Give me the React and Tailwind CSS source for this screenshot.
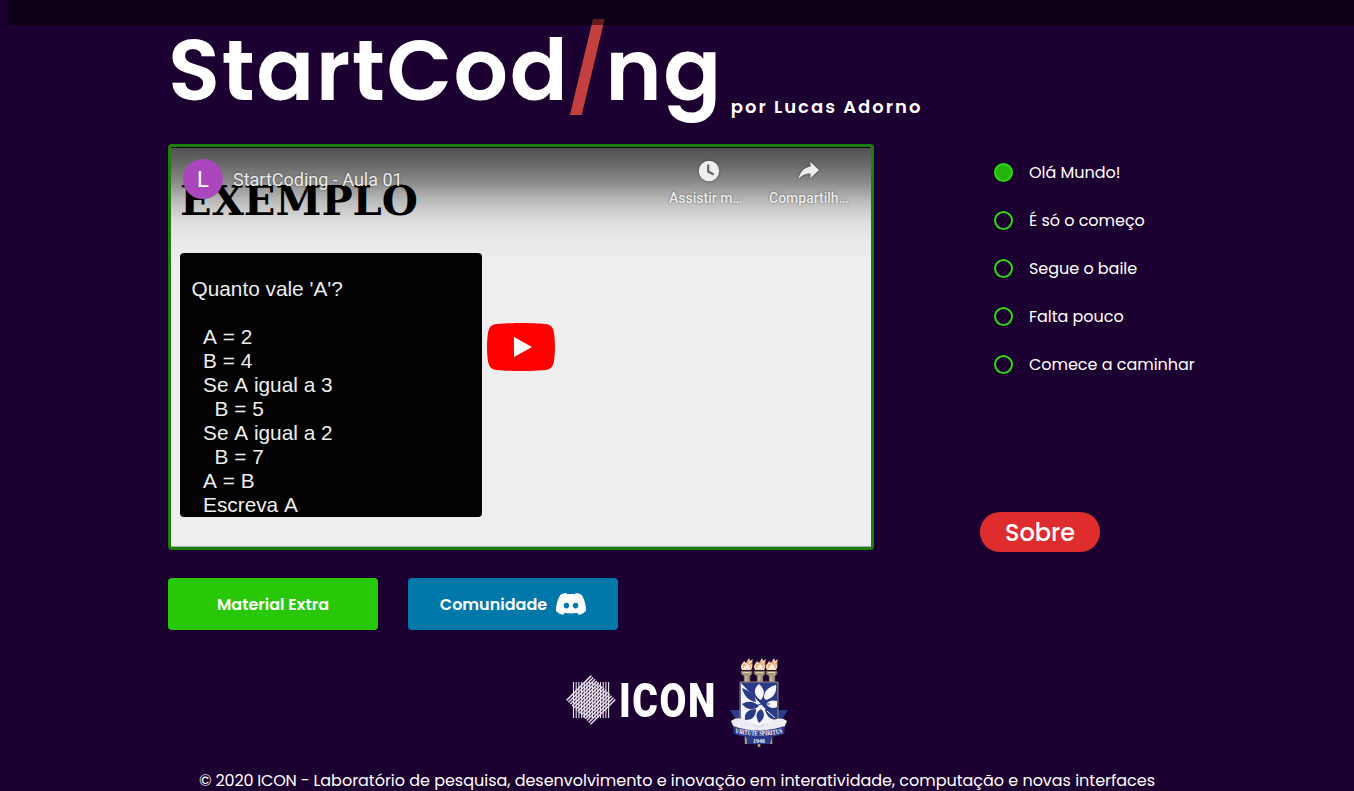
const lessons = ["Olá Mundo!", "É só o começo", "Segue o baile", "Falta pouco", "Comece a caminhar"];

const code = `Quanto vale 'A'?

  A = 2
  B = 4
  Se A igual a 3
    B = 5
  Se A igual a 2
    B = 7
  A = B
  Escreva A`;

function DiscordMark() {
  return (
    <svg viewBox="0 0 30 22" className="h-[22px] w-[30px]" fill="white">
      <path
        fillRule="evenodd"
        d="M4.500 1.700C6.300.800 8.300.200 10.300 0L11 1.200C13.600.800 16.400.800 19 1.200L19.700 0C21.700.200 23.700.800 25.500 1.700C28.500 6.200 30 11.600 30 17.800C28.200 20 25.600 21.300 22.900 22L21.300 19.700C17.300 20.700 12.700 20.700 8.700 19.700L7.100 22C4.400 21.300 1.800 20 0 17.800C0 11.600 1.500 6.200 4.500 1.700ZM10.400 9.800A2.700 2.800 0 1 0 10.400 15.400A2.700 2.800 0 1 0 10.400 9.800ZM19.600 9.800A2.700 2.800 0 1 0 19.600 15.400A2.700 2.800 0 1 0 19.600 9.800Z"
      />
    </svg>
  );
}

function IconLabMark() {
  const verticals = Array.from({ length: 14 }, (_, i) => 7.5 + i * 2.7);
  const diagonals = Array.from({ length: 14 }, (_, i) => -17 + i * 2.6);
  return (
    <svg viewBox="0 0 50 50" className="h-[50px] w-[50px]" stroke="#e6e1ea">
      {verticals.map((x) => (
        <line key={x} x1={x} x2={x} y1="7" y2="43" strokeWidth="1.1" />
      ))}
      <g transform="translate(25 25) rotate(45)">
        {diagonals.map((x) => (
          <line key={x} x1={x} x2={x} y1="-17.500" y2="17.500" strokeWidth="1.5" />
        ))}
      </g>
    </svg>
  );
}

function Torch({ x }) {
  return (
    <g transform={`translate(${x} 0)`}>
      <path d="M-5 12C-8 7-4 6-3 3L-1 5L2 0L3 3L6 1C4 5 7 8 4 12Z" fill="#f6d9b4" />
      <path d="M-4 10L-3 6L-1 8L1 3L2 7L5 4L3 10" fill="none" stroke="#e08f55" strokeWidth=".8" />
      <path d="M-2 11L0 7L2 11" fill="none" stroke="#fff" strokeWidth="1.200" />
      <path d="M-6 13H5V16L3 18V24H-3V18L-6 16Z" fill="#a99a80" stroke="#4f4437" strokeWidth=".7" />
      <path d="M-4 14.500H3M-1 18V23" stroke="#ded2b8" strokeWidth="1" />
    </g>
  );
}

function Crest() {
  return (
    <svg viewBox="0 0 58 90" className="h-[90px] w-[58px]">
      <Torch x={17} />
      <Torch x={30} />
      <Torch x={42} />
      <path d="M16 70V86M29 70V89M41 70V86" stroke="#a99a80" strokeWidth="2.500" />
      <path d="M0 52H10V66H2L5 60ZM58 52H48V66H56L53 60Z" fill="#2b3a86" />
      <path d="M10 24H48V59C47 66 37 65 29 70C21 65 11 66 10 59Z" fill="#2b3a86" stroke="#b3a78f" strokeWidth=".8" />
      <path d="M11 25L47 63C40 65 34 66 29 69C22 65 12 65 11 59Z" fill="#f4f4fa" />
      <g fill="#f4f4fa">
        <path d="M29 41C23 36 24 30 29 26C35 31 35 37 31 42Z" />
        <path d="M34 40C34 33 38 29 46 27C47 35 43 40 36 42Z" />
        <path d="M36 46C39 42 43 42 47 43V49C43 51 39 50 36 46Z" />
      </g>
      <g fill="#2b3a86">
        <path d="M12 30C20 33 25 37 26 44C19 43 14 38 12 30Z" />
        <path d="M12 46C19 42 25 44 29 48C23 53 17 52 12 46Z" />
        <path d="M15 62C14 55 18 51 26 51C26 59 22 62 15 62Z" />
        <path d="M29 65C25 58 26 54 31 51C36 56 34 61 29 65Z" />
        <path d="M46 62C39 61 36 57 35 51C42 52 46 56 46 62Z" />
      </g>
      <path d="M37 53L45 60" stroke="#f4f4fa" strokeWidth="1" />
      <path d="M22 50L31 46L40 46" fill="none" stroke="#2b3a86" strokeWidth="1" />
      <path d="M1 63C8 58 14 61 18 64L29 69L40 64C46 60 52 59 57 63L54 70C45 70 38 73 29 74C20 73 12 71 4 70Z" fill="#ececf2" />
      <path id="motto" d="M5 75Q29 80 53 75" fill="none" />
      <path d="M3 68Q29 77 55 68L54 76Q29 84 4 76Z" fill="#2b3a86" />
      <text fill="#fff" fontSize="7" fontFamily="Liberation Serif, serif" fontWeight="700">
        <textPath href="#motto" textLength="48" lengthAdjust="spacingAndGlyphs">VIRTUTE SPIRITUS</textPath>
      </text>
      <path d="M16 79H42L40 86H18Z" fill="#2b3a86" />
      <text x="29" y="84.500" textAnchor="middle" fill="#fff" fontSize="6" fontFamily="Liberation Serif, serif" fontWeight="700">1946</text>
    </svg>
  );
}

function Video() {
  return (
    <div className="relative h-[406px] w-[706px] overflow-hidden rounded border-[3px] border-[#1c8006] bg-[#eee]">
      <div className="h-full border-t border-b border-t-black border-b-[#aaa] pl-[9px]">
        <div className="pt-[29px] font-['DejaVu_Serif',serif] text-[41.5px] leading-[48px] font-bold text-black">EXEMPLO</div>
        <pre className="mt-[28px] h-[263.5px] w-[301.5px] overflow-hidden rounded bg-[#020202] pt-6 pl-[11.5px] font-['Liberation_Sans',sans-serif] text-[20.8px] leading-6 text-[#eee] [font-kerning:none]">
          {code}
        </pre>
      </div>
      <div className="absolute inset-x-0 top-px flex h-[109px] items-start bg-[linear-gradient(to_bottom,rgba(0,0,0,.66)_0%,rgba(0,0,0,.56)_15%,rgba(0,0,0,.4)_33%,rgba(0,0,0,.2)_50%,rgba(0,0,0,.07)_67%,rgba(0,0,0,.02)_85%,rgba(0,0,0,.01)_100%)] pt-[11px] pl-3 font-[Roboto,sans-serif] text-[#eee]">
        <div className="flex size-10 items-center justify-center rounded-full bg-[#ab47bc] text-[22px] text-white">L</div>
        <div className="ml-[10px] pt-[9px] text-[18px] leading-6 [text-shadow:0_0_2px_rgba(0,0,0,.6)]">StartCoding - Aula 01</div>
        <div className="absolute top-[9px] left-[498px] flex w-20 flex-col">
          <svg viewBox="0 0 24 24" className="ml-[26px] size-7 drop-shadow-[0_0_1px_rgba(0,0,0,.6)]">
            <circle cx="12" cy="12" r="8.800" fill="#eee" />
            <path d="M11.300 6.500V12.500L16 15" fill="none" stroke="#666" strokeWidth="1.900" />
          </svg>
          <span className="mt-[5px] text-[14px] leading-4 font-medium [text-shadow:0_0_2px_rgba(0,0,0,.6)]">Assistir m…</span>
        </div>
        <div className="absolute top-[9px] left-[598px] flex w-20 flex-col">
          <svg viewBox="0 0 28 28" className="ml-[25px] size-7 drop-shadow-[0_0_1px_rgba(0,0,0,.6)]">
            <path d="M16.500 5L25 13L16.500 21V16.500C11.500 16.500 8 18 4.500 22C6 15 10 10.500 16.500 9.500Z" fill="#eee" />
          </svg>
          <span className="mt-[5px] text-[14px] leading-4 font-medium [text-shadow:0_0_2px_rgba(0,0,0,.6)]">Compartilh…</span>
        </div>
      </div>
      <svg viewBox="0 0 68 48" className="absolute top-[176px] left-[316px] h-12 w-[68px]">
        <path d="M66.520 7.740c-.780-2.930-2.490-5.410-5.420-6.190C55.790.130 34 0 34 0S12.210.130 6.900 1.550c-2.930.780-4.630 3.260-5.420 6.190C.060 13.050 0 24 0 24s.060 10.950 1.480 16.260c.780 2.930 2.490 5.410 5.420 6.190C12.210 47.870 34 48 34 48s21.790-.130 27.100-1.550c2.930-.780 4.640-3.260 5.420-6.190C67.940 34.950 68 24 68 24s-.060-10.950-1.480-16.260z" fill="#f00" />
        <path d="M45 24L27 14v20" fill="#fff" />
      </svg>
    </div>
  );
}

export default function App() {
  return (
    <div className="relative flex h-[791px] flex-col overflow-hidden bg-[#1c0031] font-[Poppins,Inter,sans-serif] text-white">
      <div className="absolute top-0 right-0 left-2 z-10 h-[25px] bg-black/50" />
      <header className="flex h-[144px] shrink-0 items-start pl-[168px]">
        <h1 className="pt-[21px] text-[85.5px] leading-[99px] font-semibold tracking-[1.5px]">
          StartCod<span className="mr-[-4.5px] ml-[-2.5px] text-[#c43f40]">/</span>ng
        </h1>
        <p className="pt-[95px] pl-2 text-[18px] leading-6 font-semibold tracking-[2px]">por Lucas Adorno</p>
      </header>
      <main className="flex h-[406px] shrink-0 pl-[168px]">
        <Video />
        <aside className="ml-[106px] flex flex-col justify-between">
          <ul className="flex flex-col gap-6 pt-4 pl-[14px]">
            {lessons.map((name, i) => (
              <li key={name} className="flex h-6 items-center gap-4 text-[16px]">
                <span className={i === 0 ? "size-[19px] rounded-full border-2 border-[#2bd80a] bg-[#24b308]" : "size-[19px] rounded-full border-2 border-[#2bd80a]"} />
                <span className="pt-0.5 tracking-[-0.03px]">{name}</span>
              </li>
            ))}
          </ul>
          <button className="mb-[-2px] h-10 w-[120px] rounded-full bg-[#df2d2e] pt-px text-[24px] font-medium">Sobre</button>
        </aside>
      </main>
      <div className="flex shrink-0 gap-[30px] pt-7 pl-[168px] text-[16px] font-semibold">
        <button className="h-[52px] w-[210px] rounded bg-[#28c808] pt-0.5">Material Extra</button>
        <button className="flex h-[52px] w-[210px] items-center justify-center gap-[9px] rounded bg-[#0078aa]">
          <span className="pt-0.5">Comunidade</span>
          <DiscordMark />
        </button>
      </div>
      <footer className="flex shrink-0 flex-col items-center pt-7">
        <div className="flex h-[90px] items-center">
          <div className="flex items-center pb-1.5">
            <IconLabMark />
            <span className="ml-[3px] w-[97px] pt-px font-[Roboto,sans-serif] text-[49px] leading-[84px] font-black">
              <span className="inline-block origin-left scale-x-[.795] tracking-[2px]">ICON</span>
            </span>
          </div>
          <div className="ml-[14px]"><Crest /></div>
        </div>
        <p className="mt-[21px] text-[16px] leading-6 tracking-[-0.02px] whitespace-nowrap">
          <span className="tracking-[-0.2px]">© 2020 ICON - </span>Laboratório de pesquisa, desenvolvimento e inovação em interatividade, computação e novas interfaces
        </p>
      </footer>
    </div>
  );
}
